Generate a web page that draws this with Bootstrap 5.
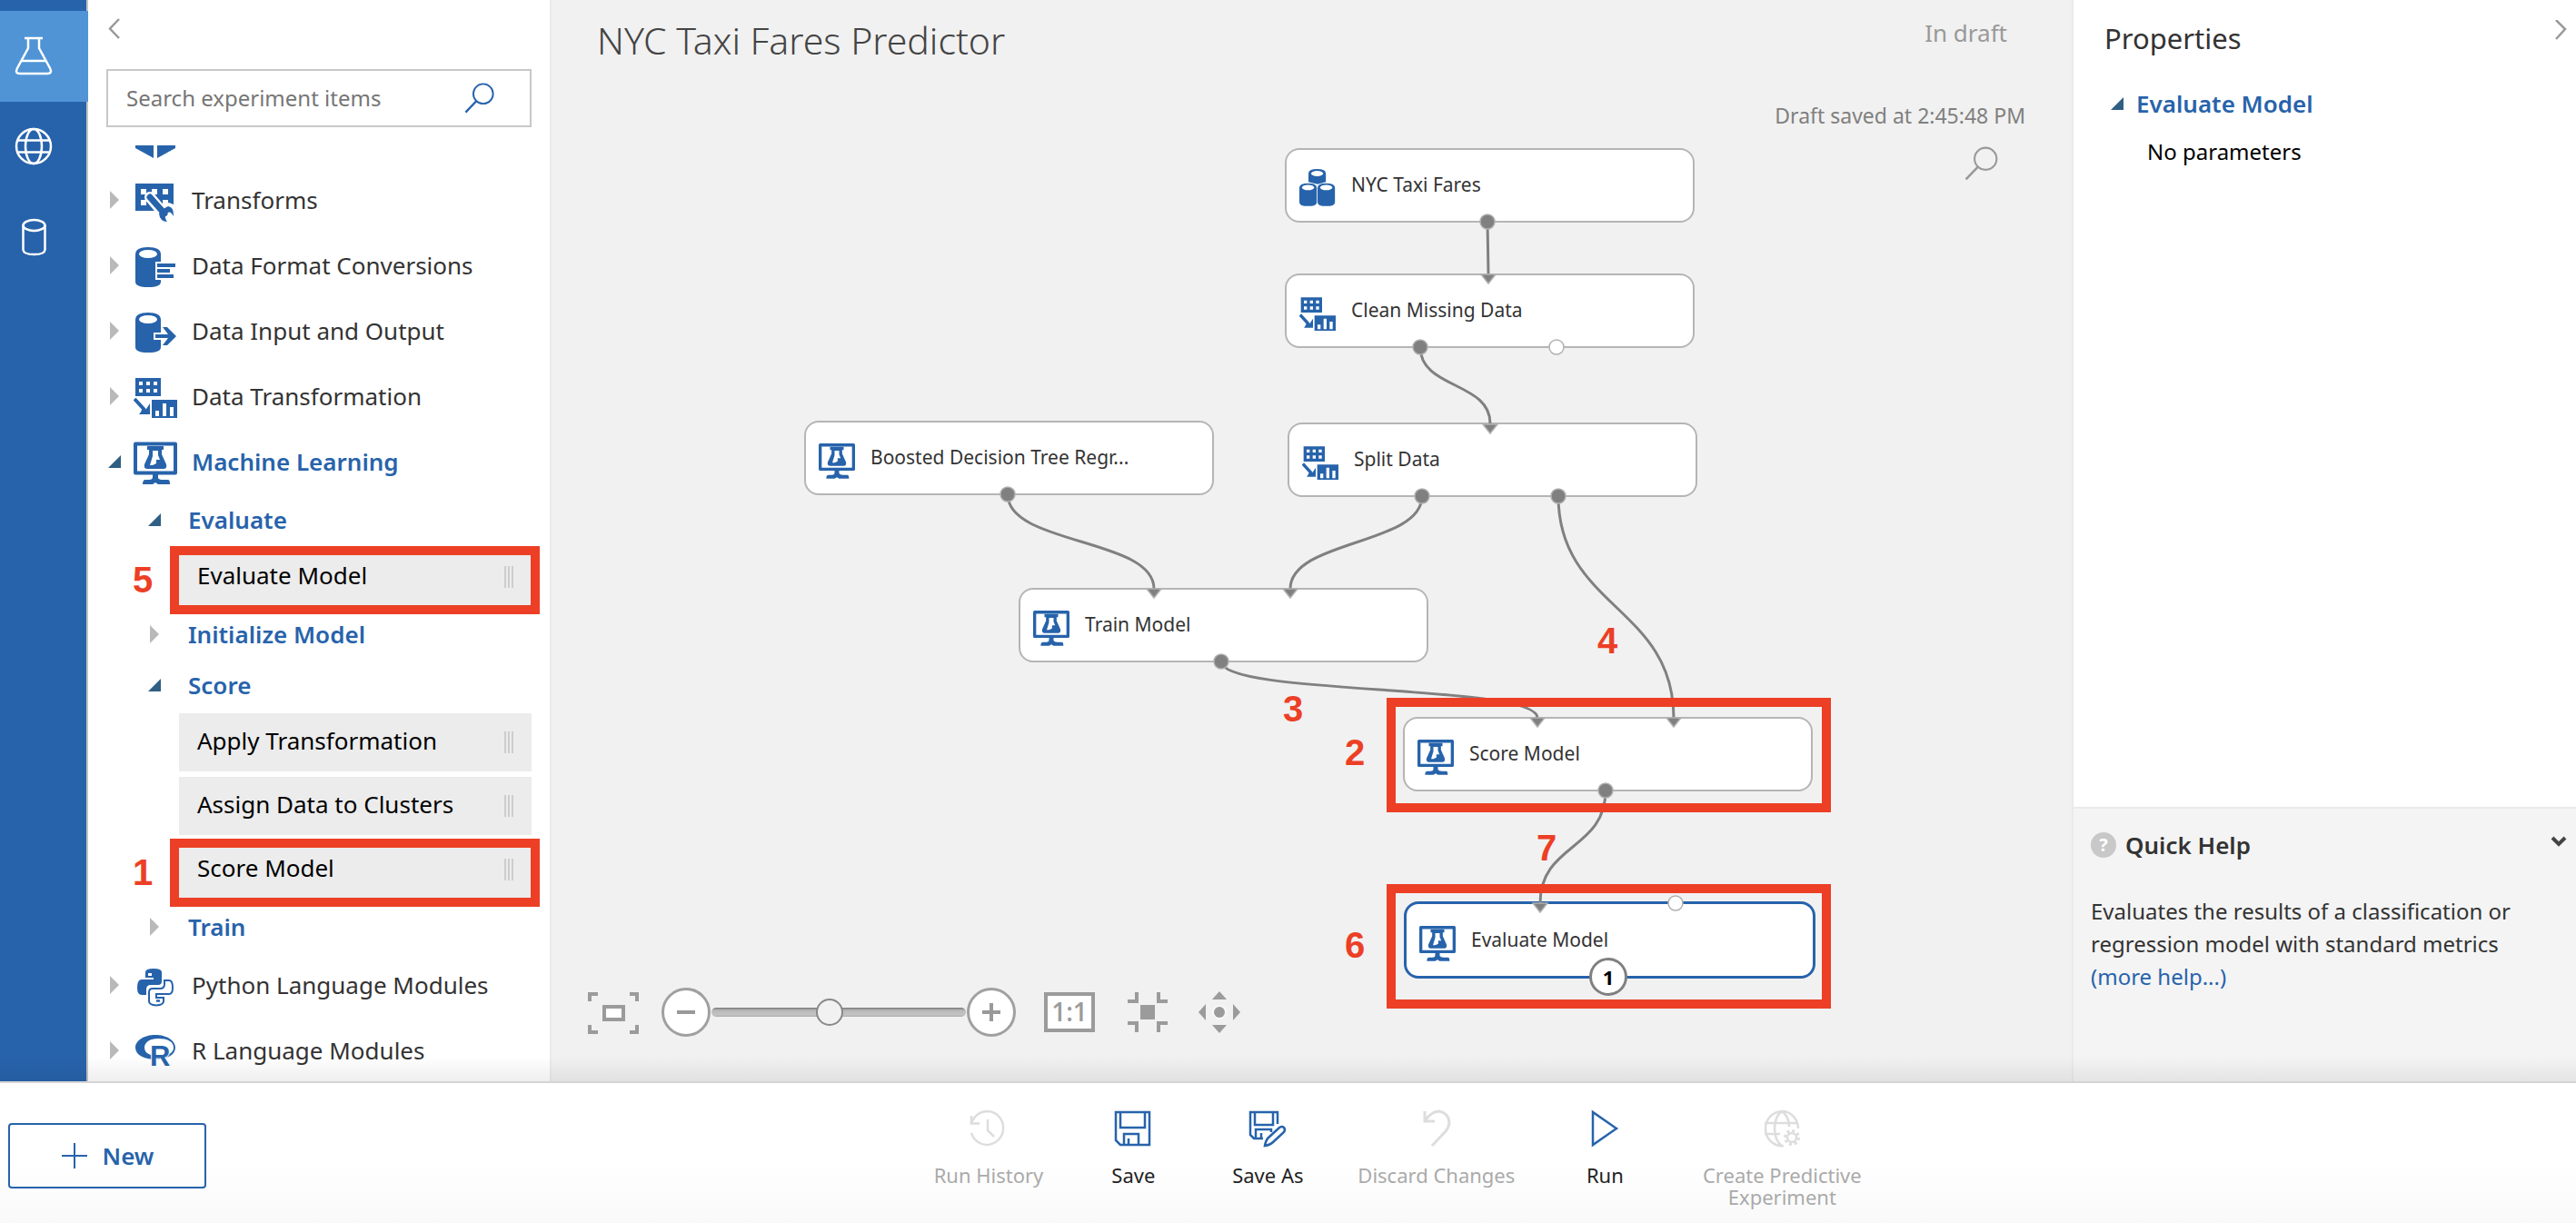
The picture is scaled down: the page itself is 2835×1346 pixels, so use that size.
<!DOCTYPE html>
<html lang="en">
<head>
<meta charset="utf-8">
<meta name="viewport" content="width=device-width, initial-scale=1">
<title>NYC Taxi Fares Predictor</title>
<link href="https://cdn.jsdelivr.net/npm/bootstrap@5.3.0/dist/css/bootstrap.min.css" rel="stylesheet">
<style>
:root{--blue:#2763ab;--red:#ec3f25;--ink:#333}
body{font-family:"Noto Sans","Open Sans",sans-serif;color:var(--ink);font-size:26px;line-height:36px;background:#fff}
button{font:inherit;color:inherit;background:none;border:0;padding:0;text-align:left}
a{color:var(--blue);text-decoration:none}
svg{display:block;flex:none}
.workarea{min-height:0}
.rail{width:97px;background:var(--blue);border-right:2px solid #c4c4c4;padding-top:12px}
.rail a{height:100px;padding-left:15px;color:#fff;margin-right:-2px}
.rail a.current{background:#5094d6}
.palette{width:508px;background:#fff}
.collapse-row{height:76px;padding:19px 0 0 21px}
.searchbox{height:64px;margin:0 20px;border:2px solid #c8c8c8}
.searchbox input{border:0;outline:0;min-width:0;padding:0 0 0 20px;font-size:24px}
.searchbox input::placeholder{color:#767676}
.searchbox button{padding-right:38px;color:var(--blue)}
.tree{margin-top:20px;overflow:hidden}
.cutoff{height:24px;padding-left:50px}
.cat{height:72px;padding-left:22px}
.cat .caret{margin-right:12px}
.cat .pic{margin-right:16px}
.sub{height:56px;padding-left:66px;font-weight:600;color:var(--blue)}
.sub .caret{margin-right:28px}
.opened{font-weight:600;color:var(--blue)}
.leaf{height:64px;margin:3px 20px 6px 100px;padding:0 19px 4px 20px;background:#ececec;color:#000;position:relative}
.leaf+.leaf{margin-top:0}
.leaf:last-child{margin-bottom:3px}
.leaf:only-child{margin-bottom:3px}
.leaf svg{margin-top:4px}
.marked::after{content:"";position:absolute;inset:-2px -9px -9px -10px;border:10px solid var(--red)}
.step{position:absolute;font:700 40px/40px "Liberation Sans",Arial,sans-serif;color:var(--red)}
.leaf .step{left:-51px;top:15px}
.canvas-pane{background:#f1f1f1;border-left:2px solid #eaeaea;position:relative;overflow:hidden;min-width:0}
.canvas-head{padding:18px 71px 0 50px}
.canvas-head h1{font-size:41px;line-height:52px;font-weight:300;color:#444;margin:0}
.state{color:#999;line-height:36px}
.saved{font-size:23px;color:#808080;line-height:36px;padding:39px 51px 0 0;text-align:right}
.findbtn{padding:16px 80px 0 0;color:#999}
.node{position:absolute;width:451px;height:82px;background:#fff;border:2px solid #b5b5b5;border-radius:16px;font-size:21px;padding:0 12px 0 14px}
.node span{margin-left:17px;padding-bottom:2px}
.node svg{margin-top:4px}
.wires{position:absolute;left:-2px;top:0;overflow:visible;pointer-events:none}
.n-fares{left:807px;top:163px}.n-clean{left:807px;top:301px}.n-split{left:810px;top:465px}
.n-tree{left:278px;top:463px}.n-train{left:514px;top:647px}.n-score{left:937px;top:789px}
.n-eval{left:938px;top:992px;width:453px;height:85px;border:3px solid var(--blue)}
.count{position:absolute;left:1142px;top:1054px;width:42px;height:42px;border:3px solid #808080;border-radius:50%;background:#fff;color:#000;font:700 22px/36px "Noto Sans",sans-serif;text-align:center}
.frame{position:absolute;border:10px solid var(--red);width:489px;left:919px}
.f-score{top:768px;height:126px}.f-eval{top:973px;height:137px}
.s2{left:873px;top:808px}.s3{left:805px;top:760px}.s4{left:1151px;top:685px}.s6{left:873px;top:1020px}.s7{left:1084px;top:913px}
.zoombar{position:absolute;left:38px;top:1086px}
.zoombar input{appearance:none;width:280px;height:30px;margin:0;background:none}
.zoombar input::-webkit-slider-runnable-track{height:10px;border-radius:5px;background:linear-gradient(#777,#b8b8b8 30%,#c4c4c4 80%,#aaa)}
.zoombar input::-webkit-slider-thumb{-webkit-appearance:none;width:30px;height:30px;margin-top:-10px;border-radius:50%;border:2px solid #888;background:#f1f1f1}
.props{width:555px;border-left:2px solid #eaeaea}
.props h2{font-size:31px;line-height:40px;margin:0;font-weight:400}
.props-head{padding:22px 9px 0 34px}
.props-group{padding:34px 0 0 41px;font-weight:600;color:var(--blue)}
.props-group .caret{margin-right:12px}
.props-note{font-size:24px;color:#000;padding:17px 0 0 81px}
.help{background:#f4f4f4;border-top:2px solid #eaeaea;height:302px;padding:21px 9px 0 19px}
.helpmark{width:28px;height:28px;background:#c8c8c8;color:#fff;font-size:20px;line-height:28px;font-weight:700;text-align:center}
.help h3{font-size:26px;line-height:38px;font-weight:600;margin:0 0 0 10px}
.help p{font-size:24px;line-height:36px;margin:36px 36px 0 0}
.commands{height:156px;background:linear-gradient(#fff 55%,#f9f9f9);position:relative;border-top:2px solid #e4e4e4}
.commands::before{content:"";position:absolute;left:0;right:0;bottom:100%;height:30px;background:linear-gradient(rgba(0,0,0,0),rgba(0,0,0,.07));pointer-events:none}
.newcell{width:250px;padding:44px 0 0 9px}
.newbtn{width:218px;height:72px;border:2px solid var(--blue);border-radius:4px;color:var(--blue);font-weight:600;font-size:26px}
.cmds{padding-top:29px;gap:50px}
.cmds button{min-width:98px;font-size:22px;line-height:24px;text-align:center;color:#222}
.cmds button svg{margin:0 auto 18px}
.cmds button:disabled{color:#aaa}
.cmds button:last-child{width:192px}
</style>
</head>
<body class="vh-100 d-flex flex-column overflow-hidden">
<svg width="0" height="0" class="position-absolute" aria-hidden="true">
<defs>
<symbol id="shut" viewBox="0 0 16 22"><path d="M2 1L12 11L2 21Z" fill="#b9b9b9"/></symbol>
<symbol id="open" viewBox="0 0 16 22"><path d="M14 4V18H0Z" fill="#2f5f83"/></symbol>
<symbol id="grip" viewBox="0 0 12 26"><path d="M2 1V25M6 1V25M10 1V25" stroke="#cdcdcd" stroke-width="2"/></symbol>
<symbol id="ml" viewBox="0 0 48 52"><path d="M2 6.500H46V38.500H2Z" fill="#fff" stroke="#2763ab" stroke-width="4" stroke-linejoin="round"/><path d="M15 9H33V13H31V18L36 29Q37 34 33 34H15Q11 34 12 29L17 18V13H15Z" fill="#2763ab"/><path d="M21 14H27V19L29 24H25V28L21 30H18L21 20Z" fill="#fff"/><path d="M21 39H27V44Q28 46 32 46H38Q40 46 40 51H27L24 49L21 51H10Q10 46 13 46H17Q21 46 21 43Z" fill="#2763ab"/></symbol>
<symbol id="dt" viewBox="0 0 48 52"><path d="M2 6H30V26H2ZM20 30H48V50H20Z" fill="#2763ab"/><path d="M6 10h4v4h-4zM14 10h4v4h-4zM22 10h4v4h-4zM6 18h4v4h-4zM14 18h4v4h-4zM22 18h4v4h-4zM24 42h4v6h-4zM32 34h4v14h-4zM40 38h4v10h-4z" fill="#fff"/><path d="M1 29L12 41" stroke="#2763ab" stroke-width="4"/><path d="M18 34V46H6Q8 44 9 41L14 40Z" fill="#2763ab"/></symbol>
<symbol id="cyl" viewBox="0 0 48 52"><path d="M2 14Q2 6 16 6T30 14V44Q30 50 16 50T2 44Z" fill="#2763ab"/><ellipse cx="16" cy="13.500" rx="10" ry="4.500" fill="#fff"/></symbol>
<symbol id="cyls" viewBox="0 0 48 52"><g id="one"><path d="M0 27Q0 21 11.500 21T23 27V46Q23 51 11.500 51T0 46Z" fill="#2763ab"/><ellipse cx="11.500" cy="26.500" rx="8" ry="3.500" fill="#fff"/></g><path d="M12 8Q12 2 23.500 2T35 8V19L24 22L12 19Z" fill="#2763ab"/><ellipse cx="23.500" cy="8" rx="8" ry="3.500" fill="#fff"/><use href="#one" x="24"/></symbol>
<symbol id="lens" viewBox="0 0 36 36"><circle cx="22" cy="13" r="11.500" fill="none" stroke="currentColor" stroke-width="2"/><path d="M14 21.500L1.500 34.500" stroke="currentColor" stroke-width="2.500"/></symbol>
</defs>
</svg>

<div class="workarea d-flex flex-grow-1">
  <nav class="rail d-flex flex-column flex-shrink-0" aria-label="Studio">
    <a href="#" class="current d-flex align-items-center" aria-label="Experiments"><svg width="44" height="44" viewBox="0 1 44 44" fill="none" stroke="#fff" stroke-width="2.500"><path d="M12 3H32M16 3V14L4 36Q1 42 7 42H37Q43 42 40 36L28 14V3M8 28H36"/></svg></a>
    <a href="#" class="d-flex align-items-center" aria-label="Web services"><svg width="44" height="44" viewBox="0 1 44 44" fill="none" stroke="#fff" stroke-width="2.500"><circle cx="22" cy="22" r="19"/><ellipse cx="22" cy="22" rx="9" ry="19"/><path d="M4 15.500H40M4 28.500H40"/></svg></a>
    <a href="#" class="d-flex align-items-center" aria-label="Datasets"><svg width="44" height="44" viewBox="0 1 44 44" fill="none" stroke="#fff" stroke-width="2.500"><ellipse cx="22.500" cy="9" rx="12" ry="6"/><path d="M10.500 9V36Q11 41 22.500 41T34.500 36V9"/></svg></a>
  </nav>

  <aside class="palette d-flex flex-column flex-shrink-0">
    <div class="collapse-row d-flex align-items-start"><button type="button" aria-label="Collapse palette"><svg width="16" height="24" viewBox="0 0 16 24"><path d="M13 2L3 12.500L13 23" fill="none" stroke="#999" stroke-width="2.500"/></svg></button></div>
    <div class="searchbox d-flex align-items-center">
      <input class="flex-grow-1" type="search" placeholder="Search experiment items" aria-label="Search experiment items">
      <button type="button" aria-label="Search"><svg width="34" height="34"><use href="#lens"/></svg></button>
    </div>
    <div class="tree flex-grow-1">
      <div class="cutoff"><svg width="48" height="16" viewBox="0 0 48 16" fill="#2763ab"><path d="M2 0H22V14L2 3ZM26 0H46V3L26 14Z"/></svg></div>
      <button type="button" class="cat d-flex align-items-center w-100"><svg class="caret" width="16" height="22"><use href="#shut"/></svg><svg class="pic" width="48" height="52" viewBox="0 0 48 52"><path d="M2 8H44V38H2Z" fill="#2763ab"/><path d="M8 14h6v6h-6zM20 14h6v6h-6zM32 14h6v6h-6zM8 26h6v6h-6zM32 26h6v6h-6z" fill="#fff"/><path d="M18 23L34 42" stroke="#fff" stroke-width="12" stroke-linecap="round"/><circle cx="37" cy="41" r="12" fill="#fff"/><path d="M18 23L34 41" stroke="#2763ab" stroke-width="7" stroke-linecap="round"/><path d="M38 33Q44 34 44 42V44Q40 36 35 42Q34 46 37 50Q29 50 28 41Q30 37 38 33Z" fill="#2763ab"/></svg>Transforms</button>
      <button type="button" class="cat d-flex align-items-center w-100"><svg class="caret" width="16" height="22"><use href="#shut"/></svg><svg class="pic" width="48" height="52" viewBox="0 0 48 52"><use href="#cyl"/><path d="M24 22H48V42H24Z" fill="#fff"/><path d="M26 24h20v4h-20zM26 30h14v4h-14zM26 36h18v4h-18z" fill="#2763ab"/></svg>Data Format Conversions</button>
      <button type="button" class="cat d-flex align-items-center w-100"><svg class="caret" width="16" height="22"><use href="#shut"/></svg><svg class="pic" width="48" height="52" viewBox="0 0 48 52"><use href="#cyl"/><path d="M22 28H32V36H22Z" fill="#fff"/><path d="M24 30H38L32 22H37L47 32L37 42H32L38 34H24Z" fill="#2763ab"/></svg>Data Input and Output</button>
      <button type="button" class="cat d-flex align-items-center w-100"><svg class="caret" width="16" height="22"><use href="#shut"/></svg><svg class="pic" width="48" height="52"><use href="#dt"/></svg>Data Transformation</button>
      <button type="button" class="cat opened d-flex align-items-center w-100" aria-expanded="true"><svg class="caret" width="16" height="22"><use href="#open"/></svg><svg class="pic" width="48" height="52"><use href="#ml"/></svg>Machine Learning</button>
      <button type="button" class="sub d-flex align-items-center w-100" aria-expanded="true"><svg class="caret" width="16" height="22"><use href="#open"/></svg>Evaluate</button>
      <div>
        <div class="leaf marked d-flex align-items-center justify-content-between"><span class="step">5</span>Evaluate Model<svg width="12" height="26"><use href="#grip"/></svg></div>
      </div>
      <button type="button" class="sub d-flex align-items-center w-100"><svg class="caret" width="16" height="22"><use href="#shut"/></svg>Initialize Model</button>
      <button type="button" class="sub d-flex align-items-center w-100" aria-expanded="true"><svg class="caret" width="16" height="22"><use href="#open"/></svg>Score</button>
      <div>
        <div class="leaf d-flex align-items-center justify-content-between">Apply Transformation<svg width="12" height="26"><use href="#grip"/></svg></div>
        <div class="leaf d-flex align-items-center justify-content-between">Assign Data to Clusters<svg width="12" height="26"><use href="#grip"/></svg></div>
        <div class="leaf marked d-flex align-items-center justify-content-between"><span class="step">1</span>Score Model<svg width="12" height="26"><use href="#grip"/></svg></div>
      </div>
      <button type="button" class="sub d-flex align-items-center w-100"><svg class="caret" width="16" height="22"><use href="#shut"/></svg>Train</button>
      <button type="button" class="cat d-flex align-items-center w-100"><svg class="caret" width="16" height="22"><use href="#shut"/></svg><svg class="pic" width="48" height="52" viewBox="0 0 48 52"><path d="M13 12Q13 8 22 8Q31 8 31 12V22Q31 26 27 26H19Q14 26 14 31V37H9Q4 37 4 29Q4 20 9 20H22V18H13Z" fill="#2763ab"/><path d="M16 13h4v3h-4z" fill="#fff"/><path d="M34 21H39Q43 21 43 29Q43 36 39 36H25V40H33V44Q33 48 25 48.500Q17 48 17 44V34Q17 30 21 30H29Q34 30 34 25Z" fill="#fff" stroke="#2763ab" stroke-width="2"/><path d="M25 43.500h4" stroke="#2763ab" stroke-width="2.500"/></svg>Python Language Modules</button>
      <button type="button" class="cat d-flex align-items-center w-100"><svg class="caret" width="16" height="22"><use href="#shut"/></svg><svg class="pic" width="48" height="52" viewBox="0 0 48 52"><path fill-rule="evenodd" d="M24 9C36 9 46 15 46 23C46 31 36 36 24 36S2 31 2 23C2 15 12 9 24 9ZM27 13C18 13 12 17 12 23S18 32 27 32S44 30 44 23S37 13 27 13Z" fill="#2763ab"/><text x="18" y="43" font-family="Liberation Sans,Arial,sans-serif" font-weight="700" font-size="31" fill="#2763ab" stroke="#fff" stroke-width="2" paint-order="stroke">R</text></svg>R Language Modules</button>
    </div>
  </aside>

  <main class="canvas-pane flex-grow-1">
    <div class="canvas-head d-flex justify-content-between align-items-start"><h1>NYC Taxi Fares Predictor</h1><span class="state">In draft</span></div>
    <div class="saved">Draft saved at 2:45:48 PM</div>
    <div class="findbtn d-flex justify-content-end"><button type="button" aria-label="Find in canvas"><svg width="38" height="38"><use href="#lens"/></svg></button></div>

    <div class="node n-fares d-flex align-items-center"><svg width="40" height="44"><use href="#cyls"/></svg><span>NYC Taxi Fares</span></div>
    <div class="node n-clean d-flex align-items-center"><svg width="40" height="44"><use href="#dt"/></svg><span>Clean Missing Data</span></div>
    <div class="node n-split d-flex align-items-center"><svg width="40" height="44"><use href="#dt"/></svg><span>Split Data</span></div>
    <div class="node n-tree d-flex align-items-center"><svg width="40" height="44"><use href="#ml"/></svg><span>Boosted Decision Tree Regr...</span></div>
    <div class="node n-train d-flex align-items-center"><svg width="40" height="44"><use href="#ml"/></svg><span>Train Model</span></div>
    <div class="node n-score d-flex align-items-center"><svg width="40" height="44"><use href="#ml"/></svg><span>Score Model</span></div>
    <div class="node n-eval d-flex align-items-center"><svg width="40" height="44"><use href="#ml"/></svg><span>Evaluate Model</span></div>

    <svg class="wires" width="1675" height="1190" viewBox="0 0 1675 1190" aria-hidden="true">
      <g fill="none" stroke="#808080" stroke-width="3">
        <path d="M1032 244L1033 301"/>
        <path d="M958 382C958 428 1035 420 1035 466"/>
        <path d="M504 544C504 600 665 592 665 648"/>
        <path d="M960 546C960 600 815 594 815 648"/>
        <path d="M1110 546C1110 668 1237 668 1237 790"/>
        <path d="M739 728C739 766 1087 752 1087 790"/>
        <path d="M1162 870C1162 936 1090 928 1090 994"/>
      </g>
      <g fill="#808080" stroke="#b0b0b0" stroke-width="1.500">
        <path d="M1025 302h16l-8 10zM1027 467h16l-8 10zM657 648h16l-8 10zM807 648h16l-8 10zM1079 790h16l-8 10zM1229 790h16l-8 10zM1082 994h16l-8 10z"/>
        <circle cx="1032" cy="244" r="8"/><circle cx="958" cy="382" r="8"/><circle cx="960" cy="546" r="8"/><circle cx="1110" cy="546" r="8"/><circle cx="504" cy="544" r="8"/><circle cx="739" cy="728" r="8"/><circle cx="1162" cy="870" r="8"/>
        <circle cx="1108" cy="382" r="8" fill="#fff"/><circle cx="1239" cy="994" r="8" fill="#fff"/>
      </g>
    </svg>
    <span class="count">1</span>
    <div class="frame f-score"></div><div class="frame f-eval"></div>
    <span class="step s2">2</span><span class="step s3">3</span><span class="step s4">4</span><span class="step s6">6</span><span class="step s7">7</span>

    <div class="zoombar d-flex align-items-center">
      <button type="button" aria-label="Fit to window"><svg width="82" height="56" viewBox="0 0 82 56" fill="none" stroke="#9b9b9b" stroke-width="4"><path d="M4 16V8H13M48 8H56V16M4 42V50H13M48 50H56V42"/><path d="M20 22H41V36H20Z" fill="#fff"/></svg></button>
      <button type="button" aria-label="Zoom out"><svg width="56" height="56" viewBox="0 0 56 56"><circle cx="28" cy="28" r="25.500" fill="#fff" stroke="#a0a0a0" stroke-width="3"/><path d="M18 28H38" stroke="#999" stroke-width="4"/></svg></button>
      <input type="range" min="0" max="100" value="46" aria-label="Zoom level">
      <button type="button" aria-label="Zoom in"><svg width="56" height="56" viewBox="0 0 56 56"><circle cx="28" cy="28" r="25.500" fill="#fff" stroke="#a0a0a0" stroke-width="3"/><path d="M18 28H38M28 18V38" stroke="#999" stroke-width="4"/></svg></button>
      <button type="button" aria-label="Actual size"><svg width="122" height="56" viewBox="0 0 122 56"><path d="M32 8H84V48H32Z" fill="#fff" stroke="#9b9b9b" stroke-width="4"/><text x="58" y="38" text-anchor="middle" font-family="Open Sans,sans-serif" font-weight="600" font-size="28" fill="#9b9b9b">1:1</text></svg></button>
      <button type="button" aria-label="Centre selection"><svg width="78" height="56" viewBox="0 0 78 56" fill="none" stroke="#9b9b9b" stroke-width="4"><path d="M0 16H10V6M44 16H34V6M0 40H10V50M44 40H34V50"/><path d="M14 20H30V36H14Z" fill="#9b9b9b" stroke="none"/></svg></button>
      <button type="button" aria-label="Pan"><svg width="46" height="56" viewBox="0 0 46 56" fill="#9b9b9b"><circle cx="23" cy="28" r="8" fill="#f8f8f8"/><circle cx="23" cy="28" r="6"/><path d="M23 5L31 14H15ZM23 51L31 42H15ZM0 28L8 19V37ZM46 28L38 19V37Z"/></svg></button>
    </div>
  </main>

  <aside class="props d-flex flex-column flex-shrink-0">
    <div class="props-head d-flex justify-content-between align-items-start"><h2>Properties</h2><button type="button" aria-label="Collapse properties"><svg width="16" height="24" viewBox="0 0 16 24"><path d="M3 0L13 10L3 21" fill="none" stroke="#999" stroke-width="2.500"/></svg></button></div>
    <div class="flex-grow-1">
      <button type="button" class="props-group d-flex align-items-center"><svg class="caret" width="16" height="22"><use href="#open"/></svg>Evaluate Model</button>
      <div class="props-note">No parameters</div>
    </div>
    <section class="help">
      <div class="d-flex align-items-center"><span class="helpmark rounded-circle" aria-hidden="true">?</span><h3>Quick Help</h3><button type="button" class="ms-auto mb-2" aria-label="Collapse help"><svg width="20" height="14" viewBox="0 0 20 14"><path d="M3 3L10 10L17 3" fill="none" stroke="#444" stroke-width="4"/></svg></button></div>
      <p>Evaluates the results of a classification or regression model with standard metrics <a href="#" class="d-block">(more help...)</a></p>
    </section>
  </aside>
</div>

<footer class="commands d-flex flex-shrink-0">
  <div class="newcell"><button type="button" class="newbtn d-flex align-items-center justify-content-center"><svg class="me-3" width="30" height="30" viewBox="0 0 30 30"><path d="M15 1V29M1 15H29" stroke="#2763ab" stroke-width="2"/></svg>New</button></div>
  <div class="cmds flex-grow-1 d-flex justify-content-center align-items-start">
    <button type="button" disabled><svg width="44" height="42" viewBox="0 0 44 42" fill="none" stroke="#ddd" stroke-width="2.500"><path d="M3 7V15.500H12M3 15Q8 2 22 2A18 18.500 0 1 1 3 26M21 11V23L28 30"/></svg>Run History</button>
    <button type="button"><svg width="44" height="42" viewBox="0 0 44 42" fill="none" stroke="#2763ab" stroke-width="2.500"><path d="M3 3H40V39H8L3 34ZM8 3V20H35V3M12 39V27H28V39M17 32V39"/></svg>Save</button>
    <button type="button"><svg width="44" height="42" viewBox="0 0 44 42" fill="none" stroke="#2763ab" stroke-width="2.500"><path d="M33 16V3H3V28L7 32H17M8 3V17H28V3M9 32V22H26V25M15 26V32M19 40Q20 34 23 31L35 20Q38 18 40 20T40 25L28 36Q25 39 19 40Z"/></svg>Save As</button>
    <button type="button" disabled><svg width="44" height="42" viewBox="0 0 44 42" fill="none" stroke="#ddd" stroke-width="3"><path d="M9 2V13H20M9 13Q16 2 25 2Q35 4 36 14Q36 19 32 24L17 40"/></svg>Discard Changes</button>
    <button type="button"><svg width="44" height="42" viewBox="0 0 44 42" fill="none" stroke="#2763ab" stroke-width="2.500"><path d="M9 3V39L35 21Z"/></svg>Run</button>
    <button type="button" disabled><svg width="44" height="42" viewBox="0 0 44 42" fill="none" stroke="#ddd" stroke-width="2.500"><path d="M40 21A18 19 0 1 0 24 40M3 15H40M3 27H20M22 2Q14 8 14 21T22 40M22 2Q30 8 30 19"/><circle cx="33" cy="31" r="5"/><circle cx="33" cy="31" r="7.500" stroke-width="3" stroke-dasharray="3 2.900"/></svg>Create Predictive Experiment</button>
  </div>
</footer>
<script src="https://cdn.jsdelivr.net/npm/bootstrap@5.3.0/dist/js/bootstrap.bundle.min.js"></script>
</body>
</html>
